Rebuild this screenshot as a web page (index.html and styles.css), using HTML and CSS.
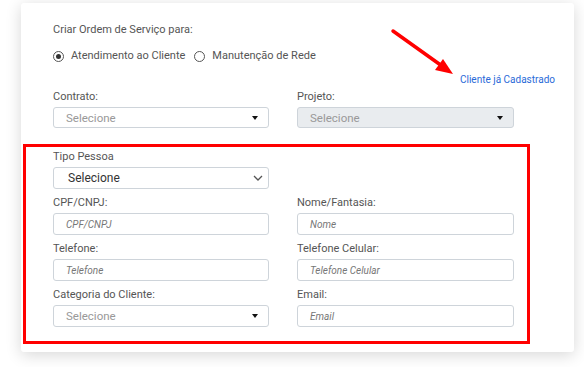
FILE: index.html
```html
<!DOCTYPE html>
<html lang="pt-BR">
<head>
<meta charset="utf-8">
<link rel="stylesheet" href="styles.css">
</head>
<body>
<div class="card">
  <p class="title">Criar Ordem de Serviço para:</p>
  <div class="radios">
    <label class="radio"><span class="dot checked"></span>Atendimento ao Cliente</label>
    <label class="radio"><span class="dot"></span>Manutenção de Rede</label>
  </div>
  <div class="link-row"><a class="link" href="#">Cliente já Cadastrado</a></div>
  <div class="grid top-grid">
    <div class="field">
      <span class="label">Contrato:</span>
      <div class="select muted">Selecione<span class="caret"></span></div>
    </div>
    <div class="field">
      <span class="label">Projeto:</span>
      <div class="select muted disabled">Selecione<span class="caret"></span></div>
    </div>
  </div>
  <section class="highlight">
    <div class="field single">
      <span class="label">Tipo Pessoa</span>
      <div class="select native">Selecione<svg class="chev" width="10" height="6" viewBox="0 0 10 6"><path d="M1 1l4 4 4-4" fill="none" stroke="#555" stroke-width="1.3"/></svg></div>
    </div>
    <div class="grid">
      <div class="field">
        <span class="label">CPF/CNPJ:</span>
        <div class="input">CPF/CNPJ</div>
      </div>
      <div class="field">
        <span class="label">Nome/Fantasia:</span>
        <div class="input">Nome</div>
      </div>
      <div class="field">
        <span class="label">Telefone:</span>
        <div class="input">Telefone</div>
      </div>
      <div class="field">
        <span class="label">Telefone Celular:</span>
        <div class="input">Telefone Celular</div>
      </div>
      <div class="field">
        <span class="label">Categoria do Cliente:</span>
        <div class="select muted">Selecione<span class="caret"></span></div>
      </div>
      <div class="field">
        <span class="label">Email:</span>
        <div class="input">Email</div>
      </div>
    </div>
  </section>
  <svg class="arrow" width="70" height="52" viewBox="0 0 70 52">
    <line x1="3" y1="3" x2="52" y2="38" stroke="#ff0000" stroke-width="3.5" stroke-linecap="round"/>
    <polygon points="63,46 45,42 53,31" fill="#ff0000"/>
  </svg>
</div>
</body>
</html>
```

FILE: styles.css
```css
html, body {
  margin: 0;
  padding: 0;
  background: #ffffff;
}
body {
  font-family: Roboto, "Liberation Sans", sans-serif;
  color: #555555;
  padding: 3px 0 16px 21px;
}
.card {
  position: relative;
  width: 553px;
  box-sizing: border-box;
  background: #ffffff;
  border-radius: 3px;
  box-shadow: 0 3px 16px rgba(0, 0, 0, 0.16);
  padding: 20px 19px 8px 32px;
}
.title {
  margin: 0;
  font-size: 11px;
  line-height: 14px;
}
.radios {
  display: flex;
  align-items: center;
  margin-top: 12px;
  font-size: 11px;
  line-height: 14px;
  gap: 9px;
}
.radio {
  display: flex;
  align-items: center;
  gap: 7px;
}
.dot {
  width: 9px;
  height: 9px;
  border: 1px solid #555;
  border-radius: 50%;
  display: inline-flex;
  align-items: center;
  justify-content: center;
  box-sizing: content-box;
}
.dot.checked::after {
  content: "";
  width: 5px;
  height: 5px;
  border-radius: 50%;
  background: #333;
}
.link-row {
  display: flex;
  justify-content: flex-end;
  margin-top: 11px;
  line-height: 12px;
}
.link {
  font-size: 10px;
  color: #2a6ad8;
  text-decoration: none;
}
.grid {
  display: grid;
  grid-template-columns: 216px 217px;
  column-gap: 28px;
  row-gap: 7px;
}
.top-grid {
  margin-top: 4px;
}
.field {
  display: flex;
  flex-direction: column;
}
.label {
  font-size: 11px;
  line-height: 14px;
  margin-bottom: 3px;
}
.select, .input {
  height: 22px;
  box-sizing: border-box;
  border: 1px solid #ced4da;
  border-radius: 3px;
  display: flex;
  align-items: center;
  background: #fff;
}
.top-grid .select {
  height: 21px;
}
.select {
  padding: 0 10px 0 12px;
  font-size: 11.5px;
  justify-content: space-between;
}
.select.muted {
  color: #999;
}
.select.disabled {
  background: #e9ecef;
}
.caret {
  width: 0;
  height: 0;
  border-left: 3.5px solid transparent;
  border-right: 3.5px solid transparent;
  border-top: 4.5px solid #111;
}
.select.native {
  height: 22px;
  color: #333;
  font-size: 12px;
  padding: 0 5px 0 14px;
}
.input {
  padding: 0 12px;
  font-size: 10px;
  font-style: italic;
  color: #777;
}
.highlight {
  margin: 16px 0 0 -30px;
  width: 507px;
  box-sizing: border-box;
  border: 3px solid #ff0000;
  padding: 3px 13px 14px 27px;
}
.single {
  width: 216px;
  margin-bottom: 7px;
}
.arrow {
  position: absolute;
  left: 369px;
  top: 25px;
}
```
